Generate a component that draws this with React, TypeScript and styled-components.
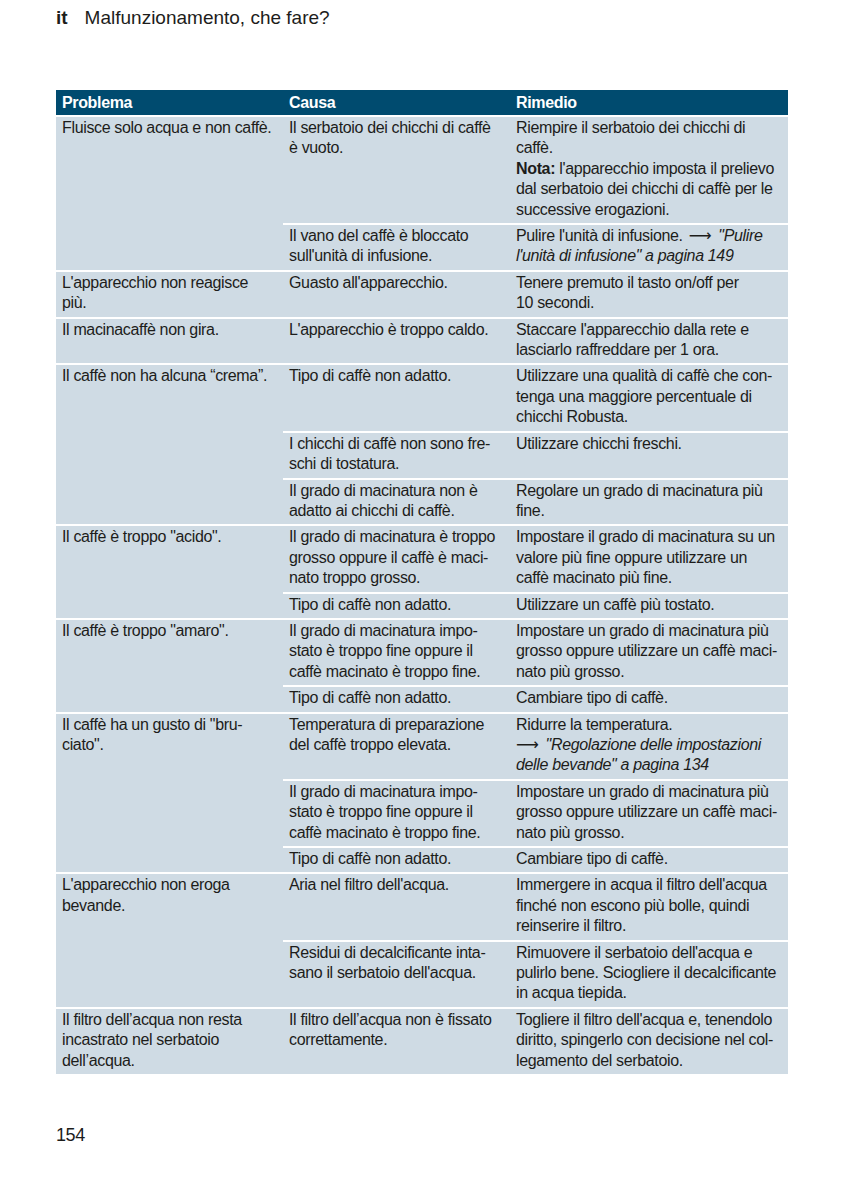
import React from "react";
import styled, { createGlobalStyle } from "styled-components";

const GlobalStyle = createGlobalStyle`
	body {
		margin: 0;
		background: #ffffff;
	}
`;

const Page = styled.div`
	width: 841px;
	min-height: 1191px;
	box-sizing: border-box;
	padding: 7px 53px 0 56px;
	font-family: "Liberation Sans", Arial, sans-serif;
	color: #1d1d1b;
`;

const PageTitle = styled.div`
	display: flex;
	gap: 17px;
	font-size: 19px;
	line-height: 22px;
`;

const Lang = styled.span`
	font-weight: bold;
`;

const Table = styled.div`
	display: flex;
	flex-direction: column;
	gap: 2px;
	margin-top: 61px;
	letter-spacing: -0.35px;
`;

const HeadRow = styled.div`
	display: grid;
	grid-template-columns: 227px 227px 278px;
	height: 25px;
	align-items: center;
	background: #004b6f;
	color: #ffffff;
	font-weight: bold;
	font-size: 16px;
`;

const HeadCell = styled.div`
	padding: 0 6px;
`;

const Group = styled.div`
	display: grid;
	grid-template-columns: 227px 505px;
	background: #cfdbe4;
`;

const SubList = styled.div`
	display: flex;
	flex-direction: column;
`;

const SubRow = styled.div`
	display: grid;
	grid-template-columns: 227px 278px;
	flex-grow: 1;

	& + & {
		border-top: 2px solid #ffffff;
	}
`;

const Cell = styled.div`
	padding: 1px 0 3px 6px;
	font-size: 16px;
	line-height: 20.4px;
	white-space: pre;
`;

const Ref = styled.span`
	font-style: italic;
`;

const Arrow = styled.span<{ $inline?: boolean }>`
	font-family: "DejaVu Sans", sans-serif;
	font-style: normal;
	margin: 0 7px 0 ${(p) => (p.$inline ? "6px" : "0")};
`;

const Footer = styled.div`
	margin-top: 50px;
	font-size: 18px;
	line-height: 22px;
	letter-spacing: -0.4px;
`;

type Sub = { cause: React.ReactNode; remedy: React.ReactNode };
type Entry = { problem: string; subs: Sub[] };

const grindFine =
	"Impostare un grado di macinatura più\ngrosso oppure utilizzare un caffè maci-\nnato più grosso.";

const entries: Entry[] = [
	{
		problem: "Fluisce solo acqua e non caffè.",
		subs: [
			{
				cause: "Il serbatoio dei chicchi di caffè\nè vuoto.",
				remedy: (
					<>
						{"Riempire il serbatoio dei chicchi di\ncaffè.\n"}
						<b>Nota:</b>
						{" l'apparecchio imposta il prelievo\ndal serbatoio dei chicchi di caffè per le\nsuccessive erogazioni."}
					</>
				),
			},
			{
				cause: "Il vano del caffè è bloccato\nsull'unità di infusione.",
				remedy: (
					<>
						{"Pulire l'unità di infusione."}
						<Arrow $inline>⟶</Arrow>
						<Ref>{"\"Pulire\nl'unità di infusione\" a pagina 149"}</Ref>
					</>
				),
			},
		],
	},
	{
		problem: "L'apparecchio non reagisce\npiù.",
		subs: [{ cause: "Guasto all'apparecchio.", remedy: "Tenere premuto il tasto on/off per\n10 secondi." }],
	},
	{
		problem: "Il macinacaffè non gira.",
		subs: [
			{
				cause: "L'apparecchio è troppo caldo.",
				remedy: "Staccare l'apparecchio dalla rete e\nlasciarlo raffreddare per 1 ora.",
			},
		],
	},
	{
		problem: "Il caffè non ha alcuna “crema”.",
		subs: [
			{
				cause: "Tipo di caffè non adatto.",
				remedy: "Utilizzare una qualità di caffè che con-\ntenga una maggiore percentuale di\nchicchi Robusta.",
			},
			{ cause: "I chicchi di caffè non sono fre-\nschi di tostatura.", remedy: "Utilizzare chicchi freschi." },
			{
				cause: "Il grado di macinatura non è\nadatto ai chicchi di caffè.",
				remedy: "Regolare un grado di macinatura più\nfine.",
			},
		],
	},
	{
		problem: "Il caffè è troppo \"acido\".",
		subs: [
			{
				cause: "Il grado di macinatura è troppo\ngrosso oppure il caffè è maci-\nnato troppo grosso.",
				remedy: "Impostare il grado di macinatura su un\nvalore più fine oppure utilizzare un\ncaffè macinato più fine.",
			},
			{ cause: "Tipo di caffè non adatto.", remedy: "Utilizzare un caffè più tostato." },
		],
	},
	{
		problem: "Il caffè è troppo \"amaro\".",
		subs: [
			{
				cause: "Il grado di macinatura impo-\nstato è troppo fine oppure il\ncaffè macinato è troppo fine.",
				remedy: grindFine,
			},
			{ cause: "Tipo di caffè non adatto.", remedy: "Cambiare tipo di caffè." },
		],
	},
	{
		problem: "Il caffè ha un gusto di \"bru-\nciato\".",
		subs: [
			{
				cause: "Temperatura di preparazione\ndel caffè troppo elevata.",
				remedy: (
					<>
						{"Ridurre la temperatura.\n"}
						<Arrow>⟶</Arrow>
						<Ref>{"\"Regolazione delle impostazioni\ndelle bevande\" a pagina 134"}</Ref>
					</>
				),
			},
			{
				cause: "Il grado di macinatura impo-\nstato è troppo fine oppure il\ncaffè macinato è troppo fine.",
				remedy: grindFine,
			},
			{ cause: "Tipo di caffè non adatto.", remedy: "Cambiare tipo di caffè." },
		],
	},
	{
		problem: "L'apparecchio non eroga\nbevande.",
		subs: [
			{
				cause: "Aria nel filtro dell'acqua.",
				remedy: "Immergere in acqua il filtro dell'acqua\nfinché non escono più bolle, quindi\nreinserire il filtro.",
			},
			{
				cause: "Residui di decalcificante inta-\nsano il serbatoio dell'acqua.",
				remedy: "Rimuovere il serbatoio dell'acqua e\npulirlo bene. Sciogliere il decalcificante\nin acqua tiepida.",
			},
		],
	},
	{
		problem: "Il filtro dell’acqua non resta\nincastrato nel serbatoio\ndell’acqua.",
		subs: [
			{
				cause: "Il filtro dell’acqua non è fissato\ncorrettamente.",
				remedy: "Togliere il filtro dell'acqua e, tenendolo\ndiritto, spingerlo con decisione nel col-\nlegamento del serbatoio.",
			},
		],
	},
];

export default function App() {
	return (
		<Page>
			<GlobalStyle />
			<PageTitle>
				<Lang>it</Lang>
				<span>Malfunzionamento, che fare?</span>
			</PageTitle>
			<Table>
				<HeadRow>
					<HeadCell>Problema</HeadCell>
					<HeadCell>Causa</HeadCell>
					<HeadCell>Rimedio</HeadCell>
				</HeadRow>
				{entries.map((entry, i) => (
					<Group key={i}>
						<Cell>{entry.problem}</Cell>
						<SubList>
							{entry.subs.map((sub, j) => (
								<SubRow key={j}>
									<Cell>{sub.cause}</Cell>
									<Cell>{sub.remedy}</Cell>
								</SubRow>
							))}
						</SubList>
					</Group>
				))}
			</Table>
			<Footer>154</Footer>
		</Page>
	);
}
